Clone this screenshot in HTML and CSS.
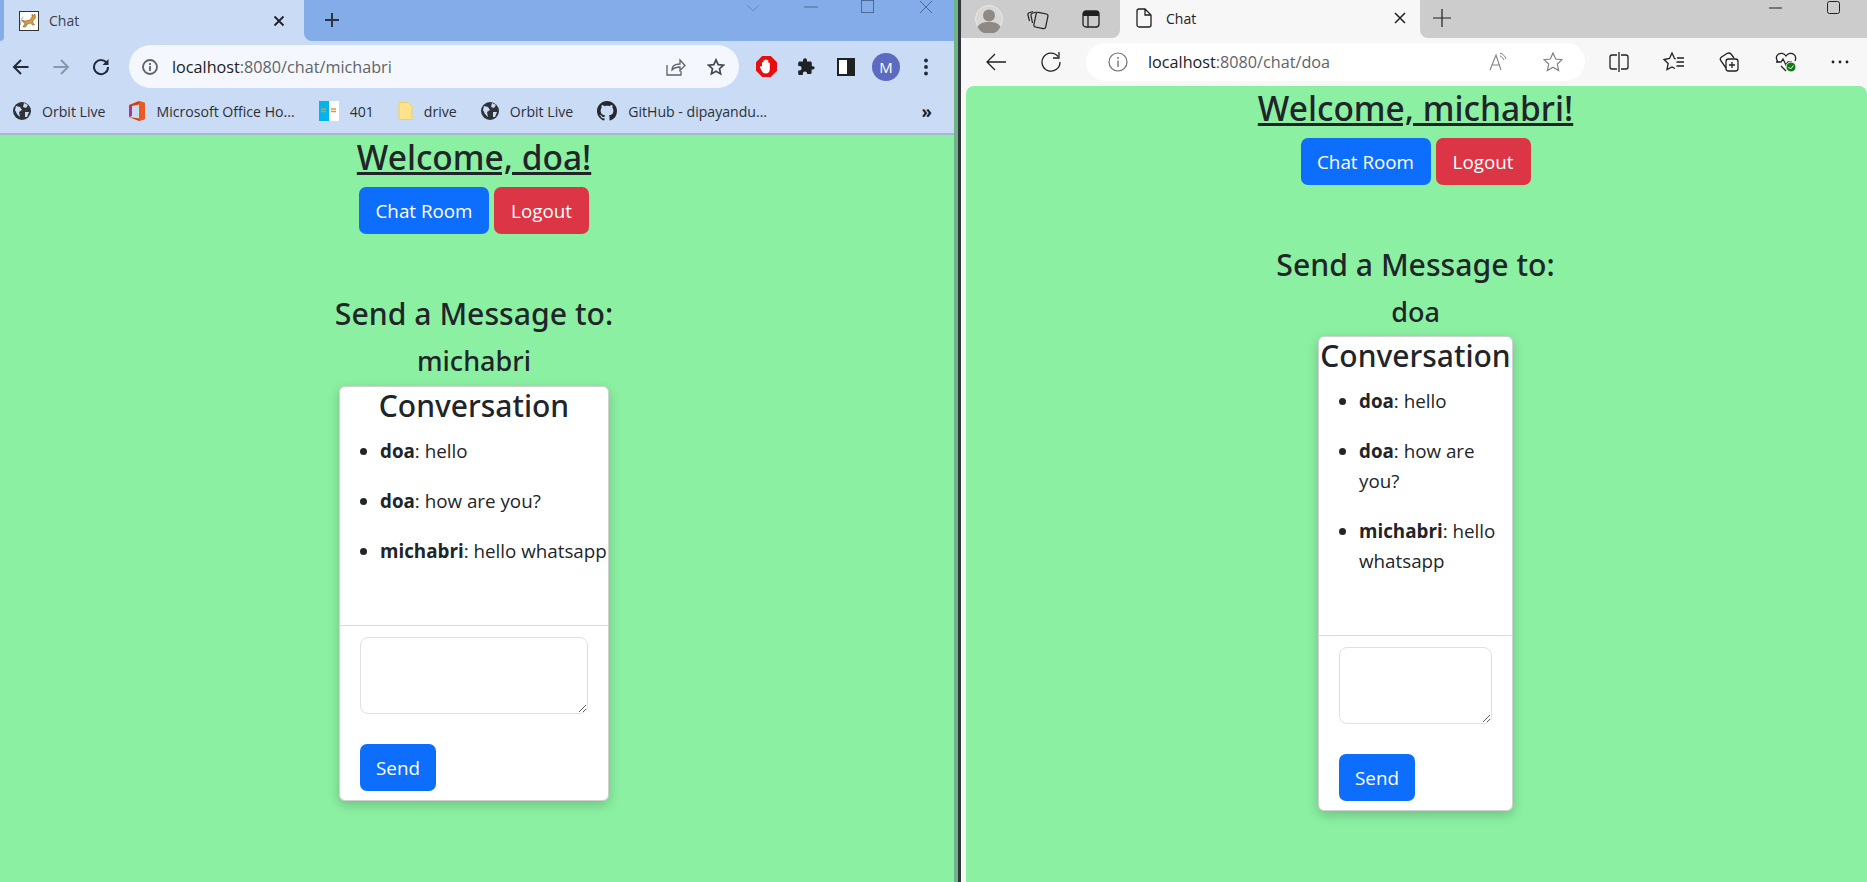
FILE: index.html
```html
<!DOCTYPE html>
<html lang="en">

<head>
  <meta charset="UTF-8">
  <title>Chat</title>
  <link rel="stylesheet" href="styles.css">
</head>

<body>
  <div class="desk">

    <!-- left window -->
    <div class="chrome">
      <div class="chrome-strip">
        <div class="strip-start"></div>
        <div class="chrome-tab">
          <svg class="favicon" width="20" height="20" viewBox="0 0 20 20">
            <rect x="0.5" y="0.5" width="19" height="19" fill="#fff" stroke="#333"/>
            <path d="M3 9l3 1 5-1 2-3 0-3 1.500 1.500L16 3l.5 4-2 2-1 2 2 3h-2l-2-2-3 1-2 3H4l2-4-2-1z" fill="#d99a3c" stroke="#6b4d1c" stroke-width=".5"/>
            <path d="M1.500 14c0-4 1-7 3-8" fill="none" stroke="#aaa"/>
          </svg>
          <span class="tab-title">Chat</span>
          <svg class="tab-close" width="12" height="12" viewBox="0 0 12 12"><path d="M1.500 1.500l9 9M10.500 1.500l-9 9" stroke="#202124" stroke-width="1.800"/></svg>
        </div>
        <div class="strip-rest">
          <svg class="tab-new" width="16" height="16" viewBox="0 0 16 16"><path d="M8 1v14M1 8h14" stroke="#2b3440" stroke-width="2"/></svg>
          <div class="win-controls">
            <svg class="ctl-chevron" width="14" height="8" viewBox="0 0 14 8"><path d="M1 1l6 6 6-6" fill="none" stroke="#6d88b4"/></svg>
            <svg class="ctl-min" width="14" height="2" viewBox="0 0 14 2"><path d="M0 1h14" stroke="#4d6a96"/></svg>
            <svg class="ctl-max" width="13" height="13" viewBox="0 0 13 13"><rect x="0.500" y="0.500" width="12" height="12" fill="none" stroke="#4d6a96"/></svg>
            <svg class="ctl-close" width="14" height="14" viewBox="0 0 14 14"><path d="M1 1l12 12M13 1L1 13" stroke="#4d6a96"/></svg>
          </div>
        </div>
      </div>

      <div class="chrome-bar">
        <div class="bar-btn"><svg width="18" height="18" viewBox="0 0 18 18"><path d="M16.500 9H2M9 2L2 9l7 7" fill="none" stroke="#202b3a" stroke-width="2"/></svg></div>
        <div class="bar-btn"><svg width="18" height="18" viewBox="0 0 18 18"><path d="M1.500 9H16M9 2l7 7-7 7" fill="none" stroke="#8b97a9" stroke-width="2"/></svg></div>
        <div class="bar-btn"><svg width="18" height="18" viewBox="0 0 18 18"><path d="M15 5.500A7 7 0 1 0 16 9" fill="none" stroke="#202b3a" stroke-width="2"/><path d="M16.500 1v6h-6z" fill="#202b3a"/></svg></div>
        <div class="chrome-address">
          <svg class="info" width="16" height="16" viewBox="0 0 16 16"><circle cx="8" cy="8" r="7" fill="none" stroke="#5f6368" stroke-width="1.800"/><path d="M8 7v5M8 4v2" stroke="#5f6368" stroke-width="1.800"/></svg>
          <span class="url"><span class="url-host">localhost</span>:8080/chat/michabri</span>
          <svg class="addr-share" width="20" height="18" viewBox="0 0 20 18"><path d="M1 7v10h14v-4M6 12c0-4 3-6 8-6V2l5 5.500-5 5V9c-4 0-6 1-8 3z" fill="none" stroke="#5f6368" stroke-width="1.300"/></svg>
          <svg class="addr-star" width="18" height="18" viewBox="0 0 18 18"><path d="M9 1.800l2.200 4.800 5.200.6-3.900 3.500 1.100 5.200L9 13.300 4.400 15.900l1.100-5.200L1.600 7.200l5.200-.6z" fill="none" stroke="#45494e" stroke-width="1.700"/></svg>
        </div>
        <div class="bar-btn ext-first">
          <svg width="21" height="21" viewBox="0 0 21 21"><path d="M6.200 0h8.600L21 6.200v8.600L14.800 21H6.200L0 14.800V6.200z" fill="#e60f0f"/><path d="M6 10V6.500a1 1 0 0 1 1.500 0V10V4.500a1 1 0 0 1 1.600 0V10V3.800a1 1 0 0 1 1.600 0V10V4.500a1 1 0 0 1 1.600 0V10.500V7a1 1 0 0 1 1.500 0v6c0 3-1.800 4.500-4 4.500-2.400 0-3.200-1-4.200-3L4 11.500c-.5-1.200.8-1.800 1.500-.9z" fill="#fff"/></svg>
        </div>
        <div class="bar-btn">
          <svg width="18" height="18" viewBox="0 0 18 18"><path d="M16 8.200h-1.200V5c0-.9-.7-1.600-1.600-1.600H10V2.200a2 2 0 1 0-4 0v1.200H2.800c-.9 0-1.600.7-1.600 1.600v3h1.200a2.200 2.200 0 1 1 0 4.400H1.200v3c0 .9.700 1.600 1.600 1.600h3v-1.200a2.200 2.200 0 1 1 4.400 0V16h2.800c.9 0 1.600-.7 1.600-1.600v-3H16a1.600 1.600 0 1 0 0-3.200z" fill="#202124"/></svg>
        </div>
        <div class="bar-btn">
          <svg width="18" height="18" viewBox="0 0 18 18"><rect x="1" y="1" width="16" height="16" fill="#fff" stroke="#202124" stroke-width="2"/><rect x="10" y="1" width="7" height="16" fill="#202124"/></svg>
        </div>
        <div class="bar-btn"><span class="avatar">M</span></div>
        <div class="bar-btn">
          <svg width="6" height="18" viewBox="0 0 6 18"><circle cx="3" cy="2.500" r="1.900" fill="#202b3a"/><circle cx="3" cy="9" r="1.900" fill="#202b3a"/><circle cx="3" cy="15.500" r="1.900" fill="#202b3a"/></svg>
        </div>
      </div>

      <div class="bookmarks">
        <div class="bookmark">
          <svg width="18" height="18" viewBox="0 0 18 18"><circle cx="9" cy="9" r="9" fill="#2f3237"/><path d="M3 4l4 1 2 3-3 2 1 5-3-3-2-4zM11 1l4 2-2 3-3-1zM12 10l4 0-2 5-2 0z" fill="#cadbf6"/></svg>
          <span>Orbit Live</span>
        </div>
        <div class="bookmark">
          <svg width="16" height="20" viewBox="0 0 16 20"><path d="M0 4l10-4 6 2v16l-6 2-10-4 10 1.500V3.500L3 5v9.500L0 16z" fill="#d83b01"/><path d="M10 0l6 2v16l-6 2z" fill="#eb5a1e"/><path d="M0 4l3 1v10l-3 1z" fill="#b7328a"/></svg>
          <span>Microsoft Office Ho...</span>
        </div>
        <div class="bookmark">
          <svg width="20" height="20" viewBox="0 0 20 20"><rect width="10" height="20" fill="#00b4ef"/><rect x="10" width="10" height="20" fill="#fff"/><path d="M2 8h5M12 8h5M2 10.500h5M12 10.500h5" stroke="#e8903a" stroke-width="1.500"/></svg>
          <span>401</span>
        </div>
        <div class="bookmark">
          <svg width="15" height="18" viewBox="0 0 15 18"><path d="M1 .5h9l4 4v13H1z" fill="#ffe38a" stroke="#f0d060"/></svg>
          <span>drive</span>
        </div>
        <div class="bookmark">
          <svg width="18" height="18" viewBox="0 0 18 18"><circle cx="9" cy="9" r="9" fill="#2f3237"/><path d="M3 4l4 1 2 3-3 2 1 5-3-3-2-4zM11 1l4 2-2 3-3-1zM12 10l4 0-2 5-2 0z" fill="#cadbf6"/></svg>
          <span>Orbit Live</span>
        </div>
        <div class="bookmark">
          <svg width="20" height="20" viewBox="0 0 16 16"><path fill="#24292f" d="M8 0C3.580 0 0 3.580 0 8c0 3.540 2.290 6.530 5.470 7.590.4.070.55-.17.55-.38 0-.19-.01-.82-.01-1.490-2.010.37-2.530-.49-2.690-.94-.09-.23-.48-.94-.82-1.130-.28-.15-.68-.52-.01-.53.630-.01 1.080.58 1.230.82.720 1.210 1.870.870 2.330.66.070-.52.280-.870.510-1.070-1.780-.2-3.640-.89-3.640-3.950 0-.87.310-1.590.820-2.150-.08-.2-.36-1.020.08-2.120 0 0 .67-.21 2.200.82.640-.18 1.320-.27 2-.27s1.360.09 2 .27c1.530-1.040 2.200-.82 2.200-.82.440 1.100.16 1.920.08 2.120.51.560.82 1.270.82 2.150 0 3.070-1.870 3.750-3.650 3.950.29.250.54.730.54 1.480 0 1.070-.01 1.930-.01 2.200 0 .21.150.46.550.38A8.013 8.013 0 0 0 16 8c0-4.420-3.580-8-8-8z"/></svg>
          <span>GitHub - dipayandu...</span>
        </div>
        <span class="more-marks">»</span>
      </div>

      <main class="page page-left">
        <h2 class="welcome">Welcome, doa!</h2>
        <div class="actions">
          <button class="btn btn-blue chat-btn">Chat Room</button>
          <button class="btn btn-red logout-btn">Logout</button>
        </div>
        <h3 class="send-title">Send a Message to:</h3>
        <h4 class="send-name">michabri</h4>
        <div class="card card-wide">
          <div class="messages">
            <h3 class="conv-title">Conversation</h3>
            <ul class="msg-list">
              <li><b>doa</b>: hello</li>
              <li><b>doa</b>: how are you?</li>
              <li><b>michabri</b>: hello whatsapp</li>
            </ul>
          </div>
          <div class="composer">
            <textarea class="msg-box"></textarea>
            <button class="btn btn-blue send-btn">Send</button>
          </div>
        </div>
      </main>
    </div>

    <div class="seam"></div>

    <!-- right window -->
    <div class="edge">
      <div class="edge-strip">
        <div class="edge-left">
          <svg class="profile" width="28" height="28" viewBox="0 0 28 28"><circle cx="14" cy="14" r="13.500" fill="#d9d7d5" stroke="#e8e8e8"/><circle cx="14" cy="10.500" r="6" fill="#8d8985"/><path d="M2.500 22c2-4 6-5 11.500-5s9.500 1 11.500 5a13 13 0 0 1-23 0z" fill="#8d8985"/></svg>
          <svg class="edge-collections" width="22" height="22" viewBox="0 0 22 22" fill="none" stroke="#202124" stroke-width="1.200"><path d="M2.500 13L1 7c-.3-1 .2-2 1.200-2.300L6 3.500"/><path d="M5.500 15L4 7.500c-.2-1 .3-1.900 1.300-2.200L9.500 4"/><rect x="8" y="5" width="12" height="15" rx="2" transform="rotate(12 14 12)"/></svg>
          <svg class="edge-tabs" width="18" height="18" viewBox="0 0 18 18"><rect x="1" y="1" width="16" height="16" rx="3" fill="none" stroke="#202124" stroke-width="1.300"/><path d="M1 6V4a3 3 0 0 1 3-3h10a3 3 0 0 1 3 3v2z" fill="#202124"/><path d="M6 6v11" stroke="#202124" stroke-width="1.300"/></svg>
        </div>
        <div class="edge-tab">
          <svg width="16" height="20" viewBox="0 0 16 20"><path d="M1 3a2 2 0 0 1 2-2h6l6 6v10a2 2 0 0 1-2 2H3a2 2 0 0 1-2-2zM9 1v6h6" fill="none" stroke="#202124" stroke-width="1.300"/></svg>
          <span class="tab-title">Chat</span>
          <svg class="tab-close" width="12" height="12" viewBox="0 0 12 12"><path d="M1 1l10 10M11 1L1 11" stroke="#202124" stroke-width="1.500"/></svg>
        </div>
        <div class="edge-rest">
          <svg class="edge-new" width="18" height="18" viewBox="0 0 18 18"><path d="M9 0v18M0 9h18" stroke="#202124" stroke-width="1.200"/></svg>
          <svg class="edge-min" width="13" height="2" viewBox="0 0 13 2"><path d="M0 1h13" stroke="#202124"/></svg>
          <svg class="edge-max" width="13" height="13" viewBox="0 0 13 13"><rect x="0.500" y="0.500" width="12" height="12" rx="2" fill="none" stroke="#202124"/></svg>
        </div>
      </div>

      <div class="edge-bar">
        <svg class="edge-back" width="20" height="18" viewBox="0 0 20 18"><path d="M20 9H1M9 1L1 9l8 8" fill="none" stroke="#202124" stroke-width="1.300"/></svg>
        <svg class="edge-reload" width="20" height="20" viewBox="0 0 20 20"><path d="M17 4.500A9 9 0 1 0 19 10" fill="none" stroke="#202124" stroke-width="1.300"/><path d="M18 0v6h-6" fill="none" stroke="#202124" stroke-width="1.300"/></svg>
        <div class="edge-address">
          <svg class="edge-info" width="20" height="20" viewBox="0 0 20 20"><circle cx="10" cy="10" r="9" fill="none" stroke="#6e6e6e" stroke-width="1.200"/><path d="M10 8.500V15M10 5v2" stroke="#6e6e6e" stroke-width="1.300"/></svg>
          <span class="url"><span class="url-host">localhost</span>:8080/chat/doa</span>
          <svg class="edge-read" width="20" height="20" viewBox="0 0 20 20"><path d="M1 18L7 3l5 15M3 13h8" fill="none" stroke="#808080" stroke-width="1.100"/><path d="M11 1c3 1 5 3 6 6M11 4c2 .5 3 2 4 4" fill="none" stroke="#808080"/></svg>
          <svg class="edge-star" width="20" height="20" viewBox="0 0 20 20"><path d="M10 1l2.700 6 6.300.7-4.700 4.300 1.300 6.500L10 15.200l-5.600 3.300 1.300-6.500L1 7.700 7.300 7z" fill="none" stroke="#808080" stroke-width="1.200"/></svg>
        </div>
        <svg class="edge-tool edge-split" width="20" height="20" viewBox="0 0 20 20"><path d="M8 3H3a2 2 0 0 0-2 2v10a2 2 0 0 0 2 2h5M12 3h5a2 2 0 0 1 2 2v10a2 2 0 0 1-2 2h-5M10 0v20" fill="none" stroke="#202124" stroke-width="1.300"/></svg>
        <svg class="edge-tool" width="22" height="20" viewBox="0 0 22 20" fill="none" stroke="#202124" stroke-width="1.300"><path d="M13 7l-1.500-.5L9 1 6.500 6.500 1 7.500l4.200 4-1.200 6 5-2.500 3 1.500"/><path d="M14 6h7M13.500 10h7.500M13.500 14h7.500"/></svg>
        <svg class="edge-tool" width="22" height="20" viewBox="0 0 22 20" fill="none" stroke="#202124" stroke-width="1.300"><path d="M7 16L2 9C1 7.500 1 6 2.500 5L8 1.500c1.500-.8 3-.5 4 .5l3 4"/><rect x="7" y="7" width="12" height="12" rx="2.500"/><path d="M13 10v6M10 13h6"/></svg>
        <svg class="edge-tool" width="22" height="22" viewBox="0 0 22 22"><path d="M3 11C1 8 1 5 3 3.500 5.500 1.500 9 2 11 5c2-3 5.500-3.500 8-1.500 2 1.500 2 4 1 6.500M11 20l-5-5" fill="none" stroke="#202124" stroke-width="1.300"/><path d="M1 11h5l2-3 3 6 2-3h4" fill="none" stroke="#202124" stroke-width="1.300"/><circle cx="16" cy="16" r="5" fill="#107c10" stroke="#f7f7f7"/><path d="M13.500 16l2 2 3-3.500" fill="none" stroke="#fff"/></svg>
        <svg class="edge-tool" width="18" height="4" viewBox="0 0 18 4"><circle cx="2" cy="2" r="1.400" fill="#202124"/><circle cx="9" cy="2" r="1.400" fill="#202124"/><circle cx="16" cy="2" r="1.400" fill="#202124"/></svg>
      </div>

      <main class="page page-right">
        <h2 class="welcome">Welcome, michabri!</h2>
        <div class="actions">
          <button class="btn btn-blue chat-btn">Chat Room</button>
          <button class="btn btn-red logout-btn">Logout</button>
        </div>
        <h3 class="send-title">Send a Message to:</h3>
        <h4 class="send-name">doa</h4>
        <div class="card card-narrow">
          <div class="messages">
            <h3 class="conv-title">Conversation</h3>
            <ul class="msg-list">
              <li><b>doa</b>: hello</li>
              <li><b>doa</b>: how are you?</li>
              <li><b>michabri</b>: hello whatsapp</li>
            </ul>
          </div>
          <div class="composer">
            <textarea class="msg-box"></textarea>
            <button class="btn btn-blue send-btn">Send</button>
          </div>
        </div>
      </main>
    </div>

  </div>
</body>

</html>
```

FILE: styles.css
```css
* {
  box-sizing: border-box;
  padding: 0;
  margin: 0;
  font-family: 'Open Sans', 'Noto Sans', sans-serif;
}

body {
  background-color: #8bf0a2;
  overflow: hidden;
}

.desk {
  display: flex;
  width: 1867px;
  height: 882px;
  overflow: hidden;
}

/* left window */
.chrome {
  display: flex;
  flex-direction: column;
  flex: 0 0 958px;
  border-right: 4px solid rgba(60, 70, 90, 0.35);
}

.chrome-strip {
  display: flex;
  height: 41px;
  background-color: #cadbf6;
}

.strip-start {
  width: 4px;
  background-color: #83ace9;
  border-bottom-right-radius: 8px;
}

.chrome-tab {
  display: flex;
  align-items: center;
  width: 300px;
  padding: 0 15px;
  background-color: #cadbf6;
  border-radius: 8px 8px 0 0;
}

.tab-title {
  font-size: 14px;
  color: #3c4043;
}

.chrome-tab .tab-title {
  margin-left: 10px;
}

.tab-close {
  margin-left: auto;
}

.chrome-tab .tab-close {
  margin-right: 4px;
}

.strip-rest {
  display: flex;
  flex: 1;
  background-color: #83ace9;
  border-bottom-left-radius: 8px;
}

.tab-new {
  margin: 12px 0 0 20px;
}

.win-controls {
  display: flex;
  align-items: flex-start;
  margin-left: 406px;
}

.ctl-chevron {
  margin-top: 4px;
}

.ctl-min {
  margin: 6px 0 0 44px;
}

.ctl-max {
  margin: 0 0 0 43px;
}

.ctl-close {
  margin: 0 0 0 45px;
}

.chrome-bar {
  display: flex;
  align-items: center;
  height: 51px;
  padding: 0 0 0 1px;
  background-color: #cadbf6;
}

.bar-btn {
  display: flex;
  align-items: center;
  justify-content: center;
  flex: 0 0 40px;
  height: 40px;
}

.ext-first {
  margin-left: 7px;
}

.chrome-address {
  display: flex;
  align-items: center;
  width: 610px;
  height: 43px;
  margin-left: 8px;
  padding: 0 14px 0 13px;
  background-color: #f4f7fd;
  border-radius: 22px;
}

.url {
  font-size: 16.200px;
  color: #5f6368;
  white-space: nowrap;
}

.url-host {
  color: #202124;
  font-size: inherit;
}

.chrome-address .url {
  margin-left: 14px;
}

.addr-share {
  margin-left: auto;
}

.addr-star {
  margin-left: 21px;
  margin-right: 0;
}

.avatar {
  display: flex;
  align-items: center;
  justify-content: center;
  width: 28px;
  height: 28px;
  font-size: 15px;
  color: #fff;
  background-color: #5c6bc0;
  border-radius: 50%;
}

.bookmarks {
  display: flex;
  align-items: center;
  gap: 24px;
  height: 43px;
  padding: 0 0 3px 13px;
  background-color: #cadbf6;
  border-bottom: 2px solid #a9b7d0;
}

.bookmark {
  display: flex;
  align-items: center;
  gap: 11px;
  font-size: 14.100px;
  color: #2b3038;
  white-space: nowrap;
}

.more-marks {
  margin-left: auto;
  margin-right: 22px;
  font-size: 17px;
  font-weight: 700;
  color: #202124;
}

/* page content, same in both windows */
.page {
  flex: 1;
  display: flex;
  flex-direction: column;
  align-items: center;
  background-color: #8bf0a2;
  color: #212529;
}

.page-left {
  padding-right: 6px;
}

.page-right {
  margin-left: 5px;
  padding-right: 2px;
  border-radius: 8px 8px 0 0;
}

.welcome {
  font-family: 'Noto Sans', sans-serif;
  font-size: 33.500px;
  line-height: 44px;
  font-weight: 500;
  text-decoration: underline;
}

.actions {
  display: flex;
  gap: 5px;
  margin-top: 8px;
}

.btn {
  height: 47px;
  font-size: 18.800px;
  color: #fff;
  border: 0;
  border-radius: 7px;
}

.btn-blue {
  background-color: #0d6efd;
}

.btn-red {
  background-color: #dc3545;
}

.chat-btn {
  width: 130px;
}

.logout-btn {
  width: 95px;
}

.send-btn {
  display: block;
  width: 76px;
  margin-top: 30px;
}

.send-title {
  margin-top: 63px;
  font-family: 'Noto Sans', sans-serif;
  font-size: 30.200px;
  line-height: 34px;
  font-weight: 500;
}

.send-name {
  margin-top: 15px;
  font-family: 'Noto Sans', sans-serif;
  font-size: 27px;
  line-height: 29px;
  font-weight: 500;
}

.card {
  margin-top: 10px;
  background-color: #fff;
  border: 1px solid rgba(0, 0, 0, 0.18);
  border-radius: 6px;
  box-shadow: 0 4px 12px rgba(0, 0, 0, 0.2);
}

.card-wide {
  width: 270px;
  margin-top: 11px;
}

.card-narrow {
  width: 195px;
}

.messages {
  padding-top: 2px;
  padding-bottom: 39px;
}

.conv-title {
  font-family: 'Noto Sans', sans-serif;
  font-size: 30px;
  line-height: 34px;
  font-weight: 500;
  text-align: center;
  white-space: nowrap;
}

.msg-list {
  margin-top: 13px;
  padding-left: 40px;
}

.msg-list li {
  margin-bottom: 20px;
  font-size: 18.800px;
  line-height: 30px;
}

.msg-list li b {
  font-size: inherit;
}

.composer {
  padding: 11px 20px 9px;
  border-top: 1px solid #d9d9de;
}

.msg-box {
  display: block;
  width: 100%;
  height: 77px;
  background-color: #fff;
  border: 1px solid #dee2e6;
  border-radius: 8px;
}

/* right window */
.seam {
  flex: 0 0 3px;
  background-color: #33363a;
}

.edge {
  display: flex;
  flex-direction: column;
  flex: 1;
  background-color: #f7f7f7;
}

.edge-strip {
  display: flex;
  height: 38px;
  background-color: #f7f7f7;
}

.edge-left {
  display: flex;
  align-items: center;
  flex: 0 0 159px;
  padding-left: 14px;
  background-color: #cccccc;
  border-bottom-right-radius: 8px;
}

.edge-collections {
  margin-left: 24px;
}

.edge-tabs {
  margin-left: 33px;
}

.edge-tab {
  display: flex;
  align-items: center;
  flex: 0 0 300px;
  padding: 0 14px 2px 16px;
  background-color: #f7f7f7;
}

.edge-tab .tab-title {
  margin-left: 14px;
  color: #202124;
}

.edge-rest {
  display: flex;
  align-items: flex-start;
  flex: 1;
  background-color: #cccccc;
  border-bottom-left-radius: 8px;
}

.edge-new {
  margin: 9px 0 0 13px;
}

.edge-min {
  margin: 7px 0 0 318px;
}

.edge-max {
  margin: 1px 0 0 45px;
}

.edge-bar {
  display: flex;
  align-items: center;
  height: 48px;
  padding-bottom: 0;
  background-color: #f7f7f7;
}

.edge-back {
  margin-left: 25px;
}

.edge-reload {
  margin-left: 35px;
}

.edge-address {
  display: flex;
  align-items: center;
  width: 499px;
  height: 38px;
  margin-left: 25px;
  padding: 0 22px;
  background-color: #fff;
  border-radius: 19px;
}

.edge-address .url {
  margin-left: 20px;
}

.edge-read {
  margin-left: auto;
}

.edge-star {
  margin-left: 34px;
}

.edge-split {
  margin-left: 24px;
}

.edge-tool + .edge-tool {
  margin-left: 34px;
}
```
